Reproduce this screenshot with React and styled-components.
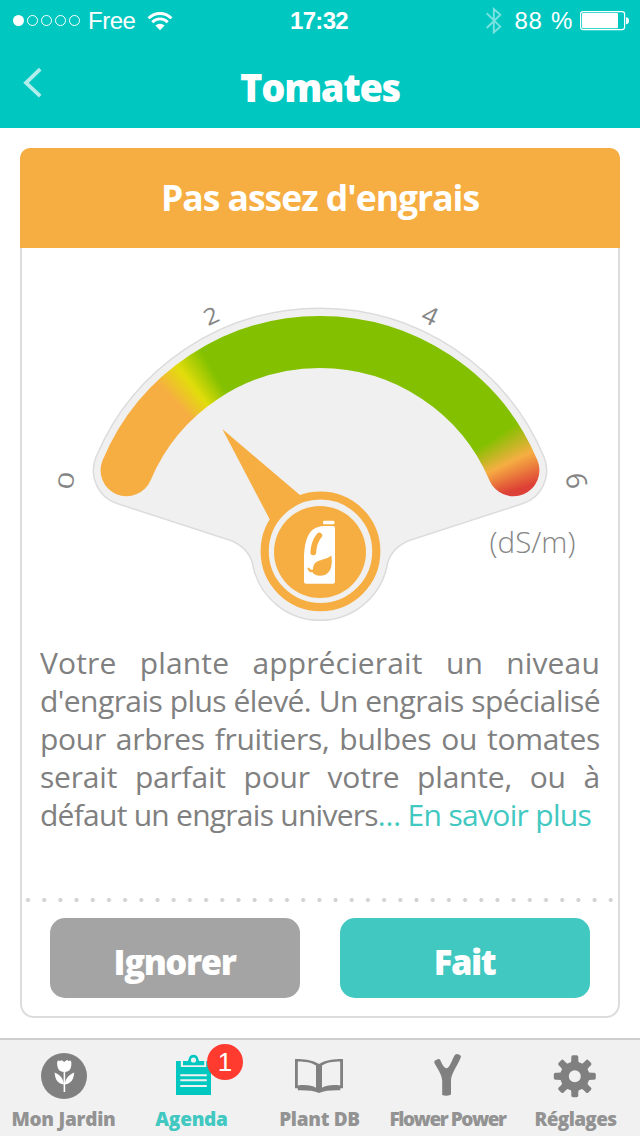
import React from 'react';
import styled, { createGlobalStyle } from 'styled-components';

const sans = '"Open Sans", "Noto Sans", sans-serif';
const system = '"Liberation Sans", Arial, sans-serif';

const GlobalStyle = createGlobalStyle`
  * { box-sizing: border-box; }
  body { margin: 0; background: #fff; }
`;

const Screen = styled.div`
  width: 640px;
  height: 1136px;
  display: flex;
  flex-direction: column;
  background: #fff;
  font-family: ${sans};
  color: #808080;
  overflow: hidden;
`;

const Header = styled.header`
  height: 128px;
  background: #00c8c1;
  color: #fff;
`;

const StatusBar = styled.div`
  height: 40px;
  display: grid;
  grid-template-columns: 1fr auto 1fr;
  align-items: center;
  padding: 1px 11px 0 12px;
  font-family: ${system};
  font-size: 24px;
  line-height: 40px;
`;

const StatusGroup = styled.div`
  display: flex;
  align-items: center;
  justify-content: ${(p) => (p.$end ? 'flex-end' : 'flex-start')};
`;

const Carrier = styled.span`
  margin: 0 12px 0 7px;
  letter-spacing: -0.5px;
`;

const Clock = styled.span`
  padding-right: 3px;
  font-weight: 700;
  letter-spacing: -0.7px;
`;

const BatteryLevel = styled.span`
  margin: 0 7px 0 12px;
  letter-spacing: 0.6px;
  word-spacing: 1.4px;
`;

const NavBar = styled.div`
  height: 88px;
  display: grid;
  grid-template-columns: 64px 1fr 64px;
`;

const BackButton = styled.button`
  border: 0;
  padding: 27px 0 0 23px;
  background: none;
  display: flex;
  align-items: flex-start;
`;

const Title = styled.h1`
  margin: 0;
  padding-top: 6px;
  text-align: center;
  font-size: 38px;
  line-height: 82px;
  font-weight: 800;
  letter-spacing: -1.3px;
`;

const Card = styled.section`
  margin: 20px 20px 0;
  height: 870px;
  display: flex;
  flex-direction: column;
  border: 2px solid #dcdcdc;
  border-top: 0;
  border-radius: 12px 12px 14px 14px;
`;

const Banner = styled.h2`
  margin: 0 -2px;
  height: 100px;
  border-radius: 10px 10px 0 0;
  background: #f6ae43;
  color: #fff;
  text-align: center;
  font-size: 35.5px;
  line-height: 98px;
  font-weight: 700;
  letter-spacing: -1px;
`;

const GaugeDrawing = styled.svg`
  display: block;
  flex: none;
`;

const ScaleText = styled.text`
  font-family: ${sans};
  font-size: ${(p) => p.$size || 23}px;
  font-weight: ${(p) => p.$weight || 400};
  fill: #858585;
  text-anchor: middle;
`;

const Advice = styled.p`
  margin: 4px 18px 0;
  height: 190px;
  font-size: 30px;
  line-height: 38px;
`;

const AdviceLine = styled.span`
  display: block;
  white-space: nowrap;
  text-align-last: ${(p) => (p.$last ? 'left' : 'justify')};
  letter-spacing: ${(p) => p.$tracking || 0}px;
`;

const MoreLink = styled.a`
  color: #41c8c1;
  letter-spacing: -0.68px;
`;

const DottedRule = styled.div`
  height: 4px;
  margin-top: 64px;
  background: radial-gradient(circle at center, #d2d2d2 1.7px, transparent 2.4px) -2.1px 0 / 16.19px 4px repeat-x;
`;

const Actions = styled.div`
  display: flex;
  justify-content: space-between;
  padding: 16px 28px 0;
`;

const ActionButton = styled.button`
  width: 250px;
  height: 80px;
  border: 0;
  border-radius: 15px;
  padding: 6px 1px 0 0;
  background: ${(p) => (p.$primary ? '#41c8c1' : '#a4a4a4')};
  color: #fff;
  font-family: ${sans};
  font-size: 34.5px;
  font-weight: 800;
  letter-spacing: -1.4px;
`;

const TabBar = styled.nav`
  margin-top: auto;
  height: 98px;
  display: grid;
  grid-template-columns: repeat(5, 128px);
  border-top: 2px solid #cfcfcf;
  background: #f1f1f1;
`;

const Tab = styled.a`
  position: relative;
  display: flex;
  flex-direction: column;
  align-items: center;
  padding-top: 12px;
  color: ${(p) => (p.$active ? '#00c8c1' : '#808080')};
`;

const TabLabel = styled.span`
  margin-top: 7px;
  padding-right: 1px;
  font-size: 19px;
  line-height: 24px;
  font-weight: 800;
  white-space: nowrap;
  letter-spacing: ${(p) => p.$tracking}px;
  color: ${(p) => (p.$active ? '#41c8c1' : '#939393')};
`;

const Badge = styled.span`
  position: absolute;
  top: 4px;
  left: 79px;
  width: 36px;
  height: 36px;
  border-radius: 50%;
  background: #ff3b30;
  color: #fff;
  font-family: ${system};
  font-size: 26px;
  line-height: 36px;
  text-align: center;
`;

const SignalDots = () => (
  <svg width="69" height="14" viewBox="12 14 69 14">
    {[18.5, 32.5, 46.5, 60.5, 74.5].map((x, i) => (
      <circle key={x} cx={x} cy="20.5" r={i ? 5 : 5.5} fill={i ? 'none' : '#fff'} stroke="#fff" strokeWidth={i ? 1 : 0} />
    ))}
  </svg>
);

const WifiIcon = () => (
  <svg width="26" height="20" viewBox="148 10 26 20" fill="none" stroke="#fff">
    <path d="M149.6 17.2A16.2 16.2 0 0 1 172.4 17.2" strokeWidth="3" />
    <path d="M153.3 21.2A10.8 10.8 0 0 1 168.7 21.2" strokeWidth="2.8" />
    <path d="M161 29.2L156.4 24.6A6.5 6.5 0 0 1 165.6 24.6Z" fill="#fff" stroke="none" />
  </svg>
);

const BluetoothIcon = () => (
  <svg width="16" height="28" viewBox="486 7 16 28" fill="none" stroke="#fff" strokeOpacity=".48" strokeWidth="1.9">
    <path d="M486.7 13.3L500.3 26.6L493.8 32.4V9L500.3 14.8L486.7 28" />
  </svg>
);

const BatteryIcon = () => (
  <svg width="49" height="20" viewBox="580 11 49 20">
    <rect x="580.6" y="11.6" width="44" height="18" rx="2.5" fill="none" stroke="#fff" strokeWidth="1.2" />
    <rect x="582" y="13" width="36" height="15.2" rx="1" fill="#fff" />
    <path d="M626 17.2Q629 17.6 629 20.7T626 24.2Z" fill="#fff" />
  </svg>
);

const BackIcon = () => (
  <svg width="20" height="32" viewBox="23 67 20 32">
    <path d="M40.2 69.2L26 82.8L40.2 96.2" fill="none" stroke="#b0edeb" strokeWidth="3.8" />
  </svg>
);

const HUB = { x: 320, y: 552 };

const polar = (radius, degrees) => {
  const a = (degrees * Math.PI) / 180;
  return `${(HUB.x - radius * Math.cos(a)).toFixed(2)} ${(HUB.y - radius * Math.sin(a)).toFixed(2)}`;
};

const wedge = (from, to) => `M${HUB.x} ${HUB.y}L${polar(300, from)}L${polar(300, to)}Z`;

const ORANGE = [246, 174, 67];
const YELLOW = [226, 221, 12];
const GREEN = [131, 193, 0];
const RED = [221, 64, 54];

const blend = (a, b, t) => `rgb(${a.map((v, i) => Math.round(v + (b[i] - v) * t)).join(',')})`;

const ramp = (from, to, a, b) => {
  const steps = Math.round((to - from) * 3);
  return Array.from({ length: steps }, (_, i) => {
    const start = from + ((to - from) * i) / steps;
    return { d: wedge(start, start + 0.8), fill: blend(a, b, (i + 0.5) / steps) };
  });
};

const WEDGES = [
  { d: wedge(-10, 46.5), fill: blend(ORANGE, ORANGE, 0) },
  ...ramp(46, 52.5, ORANGE, YELLOW),
  ...ramp(52.5, 59.5, YELLOW, GREEN),
  { d: wedge(59.5, 100), fill: blend(GREEN, GREEN, 0) },
  { d: wedge(99.5, 147), fill: blend(GREEN, GREEN, 0) },
  ...ramp(146.7, 154.7, GREEN, ORANGE),
  ...ramp(154.7, 162.5, ORANGE, RED),
  { d: wedge(162.5, 190), fill: blend(RED, RED, 0) },
];

const Gauge = () => (
  <GaugeDrawing width="596" height="392" viewBox="22 248 596 392">
    <defs>
      <mask id="band" maskUnits="userSpaceOnUse" x="80" y="300" width="480" height="220">
        <path d={`M${polar(210, 22.9)}A210 210 0 0 1 ${polar(210, 157.1)}`} fill="none" stroke="#fff" strokeWidth="52" strokeLinecap="round" />
      </mask>
    </defs>
    <path
      d="M96 457A243 243 0 0 1 544 457C552 477 541 498 523 503.5L410 540.3Q390 548 386.8 567A68.5 68.5 0 0 1 253.2 567Q250 548 230 540.3L117 503.5C99 498 88 477 96 457Z"
      fill="#f0f0f0"
      stroke="#dcdcdc"
      strokeWidth="1.5"
    />
    <g mask="url(#band)">
      {WEDGES.map((w, i) => (
        <path key={i} d={w.d} fill={w.fill} />
      ))}
    </g>
    <path d="M222.3 429L300.5 495.5L320 552L269.8 519.5Z" fill="#f6ae43" />
    <circle cx="320.5" cy="551.3" r="55.8" fill="#f0f0f0" stroke="#f6ae43" strokeWidth="8.2" />
    <circle cx="320" cy="552" r="46" fill="#f6ae43" />
    <rect x="323" y="520.7" width="11.5" height="3.6" rx="1.2" fill="#fff" />
    <path d="M324 526H333Q335 526 335 528V581.6Q335 583.8 333 583.8H306Q304 583.8 304 581.6V558C304 545 307 534 313 529.5Q318 526 324 526Z" fill="#fff" />
    <path d="M319.3 535.5Q313.8 542 313.3 552.3" fill="none" stroke="#f6ae43" strokeWidth="5.8" strokeLinecap="round" />
    <path d="M331.3 555.5C333 566 330.5 575.5 320.5 575.7Q315 576 312.2 572Q308.5 573 307.4 568L309 567.4Q310 570.3 313 569.6C313 558 325 561.5 331.3 555.5Z" fill="#f6ae43" />
    <ScaleText transform="translate(73.5 481.5) rotate(-83) scale(1.35 .92)">0</ScaleText>
    <ScaleText transform="translate(214.5 323.3) rotate(-25) scale(1.1 .98)">2</ScaleText>
    <ScaleText transform="translate(426.5 323.5) rotate(25) scale(1.12 1.08)">4</ScaleText>
    <ScaleText transform="translate(566.5 482) rotate(82) scale(1.2 1.22)">6</ScaleText>
    <ScaleText $size={29.5} $weight={300} x="532.5" y="552.5">(dS/m)</ScaleText>
  </GaugeDrawing>
);

const GardenIcon = () => (
  <svg width="48" height="48" viewBox="40 1052 48 48">
    <circle cx="64" cy="1076" r="23" fill="currentColor" />
    <path d="M57.2 1062Q58 1059.6 60.2 1061.2Q61 1059.5 62.2 1060.5L64.2 1062L66.4 1060.3Q67.6 1059.6 68.4 1061.2Q70.6 1059.6 71.3 1062C71.8 1068 70 1072 64.4 1072C58.8 1072 56.8 1068 57.2 1062Z" fill="#fff" />
    <path d="M63.6 1071H65.2V1092H63.6Z" fill="#fff" />
    <path d="M64 1084.5C57.5 1084 55 1079 54.6 1072.6C60 1075 63.4 1078.5 64 1084.5ZM64.8 1084.5C71.3 1084 73.8 1079 74.2 1072.6C68.8 1075 65.4 1078.5 64.8 1084.5Z" fill="#fff" />
  </svg>
);

const AgendaIcon = () => (
  <svg width="48" height="48" viewBox="168 1052 48 48">
    <path d="M176 1061H180.8V1067H206.2V1061H211V1095H176Z" fill="currentColor" />
    <path d="M183 1061H188L188.8 1058.5A4.8 4.8 0 0 1 198.2 1058.5L199 1061H204.2V1065.3H183Z" fill="currentColor" />
    <circle cx="193.5" cy="1060" r="2.6" fill="#f1f1f1" />
    <path d="M180.3 1075.2H206.8M180.3 1080.2H206.8M180.3 1086H206.8" stroke="#f1f1f1" strokeWidth="2.1" />
  </svg>
);

const BookIcon = () => (
  <svg width="50" height="48" viewBox="295 1052 50 48">
    <path
      fillRule="evenodd"
      fill="currentColor"
      d="M295 1059C304 1059 313 1060 319 1064C325 1060 334 1059 343 1059V1088.3H340.3V1090.2C332 1090 324 1090.5 319 1093C314 1090.5 306 1090 297.8 1090.2V1088.3H295ZM297.8 1061.5V1085.5C306 1084.5 312 1085.5 316 1087.8V1065.5C311 1062.3 305 1061.5 297.8 1061.5ZM340.2 1061.5C333 1061.5 327 1062.3 322 1065.5V1087.8C326 1085.5 332 1084.5 340.2 1085.5Z"
    />
  </svg>
);

const FlowerPowerIcon = () => (
  <svg width="48" height="48" viewBox="424 1052 48 48">
    <path d="M434.2 1062.5Q433.9 1060.8 436 1060Q439.2 1058.2 440 1059.6C442 1063.5 443.5 1068 446.7 1068.3C449.8 1067.5 451.5 1061 454.2 1056Q455.3 1053.6 458 1054.2Q461.5 1055 460.8 1057.3C458 1065 451.5 1073 451 1080V1094.6Q446.5 1096.8 442.2 1095V1081C442 1074 437.5 1069.5 434.2 1062.5Z" fill="currentColor" />
  </svg>
);

const GearIcon = () => (
  <svg width="48" height="48" viewBox="-22.8 -24.3 48 48" fill="currentColor">
    <circle r="10.3" fill="none" stroke="currentColor" strokeWidth="8.6" />
    {[0, 45, 90, 135, 180, 225, 270, 315].map((angle) => (
      <path key={angle} transform={`rotate(${angle})`} d="M-4.6 -12.5Q-3.2 -14 -3.5 -19.3Q-3.5 -21 -1.8 -21H1.8Q3.5 -21 3.5 -19.3Q3.2 -14 4.6 -12.5Z" />
    ))}
  </svg>
);

const TABS = [
  { label: 'Mon Jardin', icon: GardenIcon, tracking: -0.25 },
  { label: 'Agenda', icon: AgendaIcon, tracking: -0.25, active: true, badge: 1 },
  { label: 'Plant DB', icon: BookIcon, tracking: -0.3 },
  { label: 'Flower Power', icon: FlowerPowerIcon, tracking: -1.45 },
  { label: 'Réglages', icon: GearIcon, tracking: -0.65 },
];

export default function App() {
  return (
    <Screen>
      <GlobalStyle />
      <Header>
        <StatusBar>
          <StatusGroup>
            <SignalDots />
            <Carrier>Free</Carrier>
            <WifiIcon />
          </StatusGroup>
          <Clock>17:32</Clock>
          <StatusGroup $end>
            <BluetoothIcon />
            <BatteryLevel>88 %</BatteryLevel>
            <BatteryIcon />
          </StatusGroup>
        </StatusBar>
        <NavBar>
          <BackButton aria-label="Retour">
            <BackIcon />
          </BackButton>
          <Title>Tomates</Title>
        </NavBar>
      </Header>
      <Card>
        <Banner>Pas assez d'engrais</Banner>
        <Gauge />
        <Advice>
          <AdviceLine $tracking={0.15}>Votre plante apprécierait un niveau</AdviceLine>
          <AdviceLine $tracking={-0.56}>d'engrais plus élevé. Un engrais spécialisé</AdviceLine>
          <AdviceLine $tracking={-0.3}>pour arbres fruitiers, bulbes ou tomates</AdviceLine>
          <AdviceLine $tracking={-0.2}>serait parfait pour votre plante, ou à</AdviceLine>
          <AdviceLine $tracking={-0.74} $last>
            défaut un engrais univers<MoreLink>… En savoir plus</MoreLink>
          </AdviceLine>
        </Advice>
        <DottedRule />
        <Actions>
          <ActionButton>Ignorer</ActionButton>
          <ActionButton $primary>Fait</ActionButton>
        </Actions>
      </Card>
      <TabBar>
        {TABS.map(({ label, icon: Icon, tracking, active, badge }) => (
          <Tab key={label} $active={active}>
            <Icon />
            {badge && <Badge>{badge}</Badge>}
            <TabLabel $tracking={tracking} $active={active}>{label}</TabLabel>
          </Tab>
        ))}
      </TabBar>
    </Screen>
  );
}
